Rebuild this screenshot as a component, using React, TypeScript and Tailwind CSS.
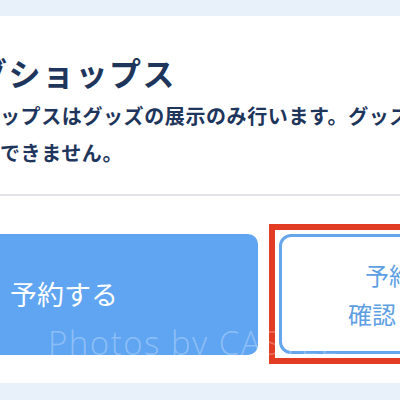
import React from 'react'

export default function App() {
  return (
    <div
      className="relative w-[400px] h-[400px] overflow-hidden bg-[#e8f1fa] pt-[16px]"
      style={{ fontFamily: '"Noto Sans CJK JP", "Noto Sans", sans-serif' }}
    >
      <div className="bg-white h-[367px] w-[400px]">
        {/* header text */}
        <div className="pt-[36px] text-[#1f365c]">
          <h1 className="ml-[-25px] whitespace-nowrap text-[32px] leading-[40px] font-bold tracking-[1.5px]">
            グショップス
          </h1>
          <p className="mt-[5px] whitespace-nowrap text-[20px] leading-[37px] font-semibold tracking-[0.6px]">
            ップスはグッズの展示のみ行います。グッズの購入は
            <br />
            できません。
          </p>
        </div>

        <div className="mt-[23px] h-[2px] bg-[#e3e4ea]" />

        {/* buttons */}
        <div className="mt-[28px] flex items-center">
          <button className="ml-[-10px] w-[268px] h-[121px] shrink-0 rounded-[10px] bg-[#5fa5f2] pl-[20px] text-left text-[27px] font-normal text-white">
            予約する
          </button>
          <div className="ml-[11px] shrink-0 w-[290px] h-[140px] border-[6px] border-[#e33c24] p-[4px]">
            <div className="flex h-full w-[262px] flex-col items-start justify-center rounded-[12px] border-[3px] border-[#65a6ec] bg-white pl-[66px] text-[24px] leading-[39px] text-[#5e9fe3]">
              <span className="ml-[17px]">予約の</span>
              <span>確認・変更</span>
            </div>
          </div>
        </div>
      </div>

      {/* watermark */}
      <div
        className="pointer-events-none absolute left-[48px] top-[318px] whitespace-nowrap text-[33px] font-light tracking-[1.5px] text-white/30"
        style={{ fontFamily: '"Open Sans", sans-serif' }}
      >
        Photos by CASTEL
      </div>
    </div>
  )
}
